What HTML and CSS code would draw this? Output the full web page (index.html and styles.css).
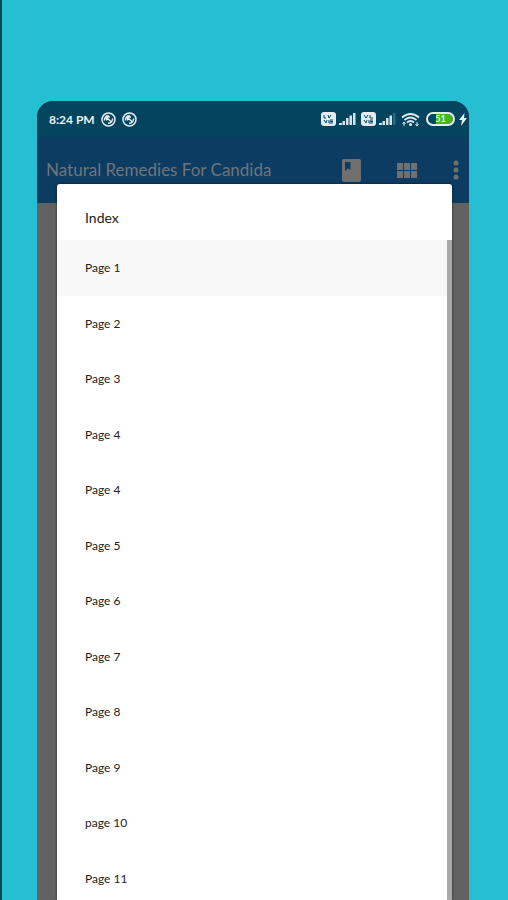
FILE: index.html
```
<!DOCTYPE html>
<html lang="en">
<head>
    <meta charset="UTF-8">
    <meta name="viewport" content="width=device-width, initial-scale=1.0">
    <title>Natural Remedies For Candida</title>
    <link rel="stylesheet" href="styles.css">
</head>
<body>

<div class="phone">
    <!-- Status bar -->
    <div class="status-bar">
        <span class="time">8:24 PM</span>
        <svg class="notice" width="15" height="15" viewBox="0 0 15 15"><circle cx="7.500" cy="7.500" r="6.500"/><path d="M3.500 8.500A4 4 0 0 1 8 3.800M11.500 6.500A4 4 0 0 1 7 11.200M5 5l5.500 5M5.500 8.500V5H9"/></svg>
        <svg class="notice" width="15" height="15" viewBox="0 0 15 15"><circle cx="7.500" cy="7.500" r="6.500"/><path d="M3.500 8.500A4 4 0 0 1 8 3.800M11.500 6.500A4 4 0 0 1 7 11.200M5 5l5.500 5M5.500 8.500V5H9"/></svg>
        <div class="signals">
            <svg width="36" height="14" viewBox="0 0 36 14">
                <rect width="15" height="14" rx="3" fill="#e4eef2"/>
                <path d="M3 3v3h2M7 3l1 3 2-3M3 8l2 3 1-3M8 8v3h4M12 8H9M9 9.500h3" fill="none" stroke="#04445f"/>
                <path d="M18 11h3v2h-3zM21.500 9h2.500v4h-2.500zM25 6h2.500v7H25zM28.500 3.500H31V13h-2.500zM32 1h2.500v12H32z" fill="#d5e3e8"/>
            </svg>
            <svg width="36" height="14" viewBox="0 0 36 14">
                <rect width="15" height="14" rx="3" fill="#e4eef2"/>
                <path d="M3 3l2 3 2-3M9 3v3h3M3 8l2 3 1-3M8 8v3h4M12 8H9M9 9.500h3" fill="none" stroke="#04445f"/>
                <path d="M18 11h3v2h-3zM21.500 9h2.500v4h-2.500zM25 6h2.500v7H25zM28.500 3.500H31V13h-2.500z" fill="#d5e3e8"/>
                <path d="M32 1h2.500v12H32z" fill="#316780"/>
            </svg>
            <svg width="19" height="15" viewBox="0 0 19 15">
                <path d="M1 5.500q8.500-7 17 0M3.500 8q6-5 12 0M6 10.500q3.500-3 7 0" fill="none" stroke="#dce9ee" stroke-width="1.800"/>
                <circle cx="9.500" cy="12.500" r="1.500" fill="#dce9ee"/>
                <path d="M3 10v4M1.500 12L3 10l1.500 2M16 10v4M14.500 12l1.500 2 1.500-2" fill="none" stroke="#dce9ee"/>
            </svg>
            <div class="battery"><span>51</span></div>
            <svg width="8" height="13" viewBox="0 0 8 13"><path d="M5.500 0L0 7h3L2 13l6-8H5z" fill="#e9f2f5"/></svg>
        </div>
    </div>

    <!-- App bar -->
    <header class="app-bar">
        <h1>Natural Remedies For Candida</h1>
        <button class="book" aria-label="Index">
            <svg width="19" height="23" viewBox="0 0 19 23"><path fill-rule="evenodd" d="M2 0h15q2 0 2 2v19q0 2-2 2H2q-2 0-2-2V2q0-2 2-2zM3 3v9l3-2.500L8.500 11V3z"/></svg>
        </button>
        <button class="grid" aria-label="Pages">
            <svg width="20" height="15" viewBox="0 0 20 15"><path d="M0 0h6v7H0zM7 0h6v7H7zM14 0h6v7h-6zM0 8h6v7H0zM7 8h6v7H7zM14 8h6v7h-6z"/></svg>
        </button>
        <button class="more" aria-label="More options">
            <svg width="6" height="20" viewBox="0 0 6 20"><circle cx="3" cy="3" r="2.500"/><circle cx="3" cy="10" r="2.500"/><circle cx="3" cy="17" r="2.500"/></svg>
        </button>
    </header>

    <!-- Index dialog -->
    <div class="dialog" role="dialog" aria-labelledby="dialogTitle">
        <h2 id="dialogTitle">Index</h2>
        <ul class="page-list">
            <li><button class="selected">Page 1</button></li>
            <li><button>Page 2</button></li>
            <li><button>Page 3</button></li>
            <li><button>Page 4</button></li>
            <li><button>Page 4</button></li>
            <li><button>Page 5</button></li>
            <li><button>Page 6</button></li>
            <li><button>Page 7</button></li>
            <li><button>Page 8</button></li>
            <li><button>Page 9</button></li>
            <li><button>page 10</button></li>
            <li><button>Page 11</button></li>
        </ul>
    </div>
</div>

</body>
</html>
```
FILE: styles.css
```
* {
    box-sizing: border-box;
}

body {
    margin: 0;
    height: 100vh;
    padding: 101px 39px 0 35px;
    border-left: 2px solid #0b4459;
    background: #25bed2;
    font-family: Lato, "Open Sans", sans-serif;
    overflow: hidden;
}

button {
    border: none;
    padding: 0;
    background: none;
    font: inherit;
    color: inherit;
    cursor: pointer;
}

svg {
    display: block;
    flex: none;
}

.phone {
    position: relative;
    height: 100%;
    background: #626262;
    border-radius: 16px 16px 0 0;
    overflow: hidden;
}

/* Status bar */
.status-bar {
    display: flex;
    align-items: center;
    gap: 6px;
    height: 36px;
    padding: 0 2px 0 12px;
    background: #04445f;
    color: #e9f2f5;
}

.time {
    font-size: 12px;
    font-weight: bold;
    white-space: nowrap;
}

.notice {
    fill: none;
    stroke: #e4eef2;
    stroke-width: 1.5;
}

.signals {
    display: flex;
    align-items: center;
    gap: 4px;
    margin-left: auto;
}

.battery {
    display: flex;
    align-items: center;
    justify-content: center;
    width: 29px;
    height: 14px;
    margin-left: 2px;
    border: 2px solid #e4eef2;
    border-radius: 7px;
    background: linear-gradient(90deg, #04445f 8px, #48b51c 8px);
    background-clip: padding-box;
    font-size: 9px;
    font-weight: bold;
    line-height: 10px;
}

/* App bar */
.app-bar {
    display: flex;
    align-items: center;
    height: 66px;
    padding: 0 10px 0 9px;
    background: #0c3c61;
    color: #70757a;
}

.app-bar h1 {
    flex: 1;
    margin: 0;
    font-size: 17px;
    font-weight: normal;
    line-height: 24px;
    white-space: nowrap;
}

.app-bar svg {
    fill: #707070;
}

.app-bar .grid {
    margin: 0 36px;
}

/* Index dialog */
.dialog {
    position: absolute;
    top: 83px;
    right: 17px;
    bottom: 0;
    left: 20px;
    background: #fff;
    border-radius: 3px 3px 0 0;
    box-shadow: 0 0 3px rgba(0, 0, 0, 0.6);
    color: #222;
    overflow: hidden;
}

.dialog h2 {
    margin: 0;
    height: 56px;
    padding: 6px 28px 0;
    font-size: 14px;
    font-weight: normal;
    line-height: 56px;
}

.page-list {
    display: grid;
    grid-auto-rows: 1fr;
    height: 666px;
    margin: 0;
    padding: 0;
    border-right: 5px solid #aaa;
    list-style: none;
}

.page-list button {
    width: 100%;
    height: 100%;
    padding: 0 28px;
    font-size: 12px;
    text-align: left;
}

.page-list .selected {
    background: #f8f8f8;
}
```
